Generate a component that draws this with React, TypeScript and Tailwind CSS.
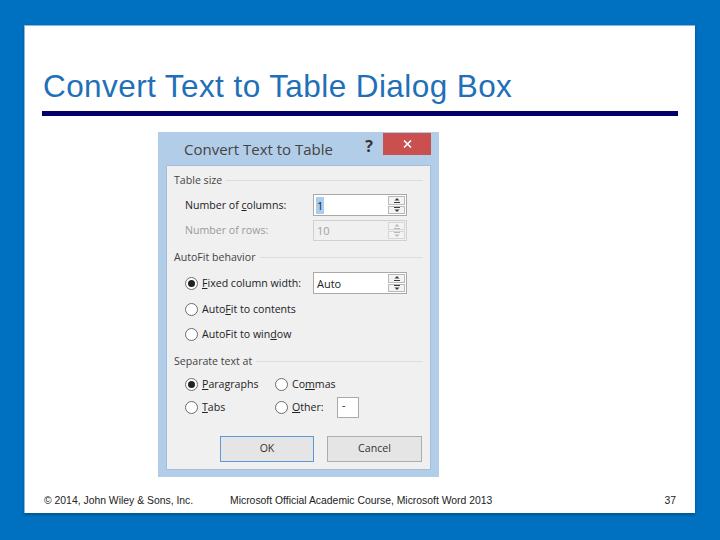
import React from "react";

const ui = { fontFamily: '"Open Sans", "Noto Sans", sans-serif' };

function Spinner({ disabled }: { disabled?: boolean }) {
  const c = disabled ? "#b8b8b8" : "#3a3a3a";
  const b = disabled ? "border-[#d6d6d6]" : "border-[#b9b9b9]";
  return (
    <div className="flex flex-col h-full w-[18px] py-[1px] pr-[1px] gap-[1px]">
      <div className={`flex-1 flex items-center justify-center border ${b} bg-[#f3f3f3]`}>
        <svg width="8" height="6" viewBox="0 0 8 6">
          <path d="M1.5 3.5 L4 1 L6.5 3.5 Z" fill={c} />
          <path d="M1 5.5 H7" stroke={c} strokeWidth="1" />
        </svg>
      </div>
      <div className={`flex-1 flex items-center justify-center border ${b} bg-[#f3f3f3]`}>
        <svg width="8" height="6" viewBox="0 0 8 6">
          <path d="M1 0.5 H7" stroke={c} strokeWidth="1" />
          <path d="M1.5 2.5 L4 5 L6.5 2.5 Z" fill={c} />
        </svg>
      </div>
    </div>
  );
}

function NumInput({ value, disabled, selected, h }: { value: string; disabled?: boolean; selected?: boolean; h: string }) {
  return (
    <div
      className={`flex items-center w-[94px] ${h} border ${
        disabled ? "border-[#d0d0d0] bg-[#f0f0f0] text-[#a0a0a0]" : "border-[#a9a9a9] bg-white text-[#222]"
      }`}
    >
      <div className="flex-1 pl-[2px] text-[11px] leading-none" style={ui}>
        {selected ? <span className="bg-[#a8cdee] px-[1px] py-[1px]">{value}</span> : <span className="pl-[1px]">{value}</span>}
      </div>
      <Spinner disabled={disabled} />
    </div>
  );
}

function Radio({ checked }: { checked?: boolean }) {
  return (
    <div className="w-[13px] h-[13px] rounded-full border border-[#6d6d6d] bg-white flex items-center justify-center shrink-0">
      {checked && <div className="w-[7px] h-[7px] rounded-full bg-[#222]" />}
    </div>
  );
}

function GroupLabel({ text }: { text: string }) {
  return (
    <div className="flex items-center h-[20px] pl-[7px] pr-[7px] gap-[4px]">
      <span className="text-[10.6px] text-[#444] leading-none whitespace-nowrap">{text}</span>
      <div className="flex-1 h-px bg-[#dcdcdc]" />
    </div>
  );
}

export default function App() {
  return (
    <div className="w-[720px] h-[540px] bg-[#0071c1] pt-[25px] pl-[24px]">
      <div className="w-[671px] h-[488px] bg-white border-l border-t border-[#8db4dc] shadow-[0_2px_3px_rgba(0,0,0,0.25)] flex flex-col">
        <div
          className="mt-[42px] pl-[18px] h-[36px] text-[31.5px] leading-[36px] tracking-[0.42px] text-[#1f70b6] whitespace-nowrap"
          style={{ fontFamily: '"Liberation Sans", Arial, sans-serif' }}
        >
          Convert Text to Table Dialog Box
        </div>
        <div className="mt-[7px] ml-[17px] w-[636px] h-[5px] bg-[#000068]" />

        <div className="mt-[16px] ml-[133px] w-[281px] h-[345px] bg-[#b2cde8] flex flex-col" style={ui}>
          <div className="h-[33px] flex items-start relative">
            <div className="pl-[26px] pt-[7px] text-[15px] leading-[20px] text-[#444] whitespace-nowrap">
              Convert Text to Table
            </div>
            <div className="flex-1" />
            <div className="pt-[4px] pr-[10px] text-[16px] font-bold text-[#333] leading-[20px]">?</div>
            <div className="mt-[1px] mr-[8px] w-[48px] h-[22px] bg-[#c9504f] flex items-center justify-center">
              <svg width="9" height="8" viewBox="0 0 9 8">
                <path d="M1 0.5 L8 7.5 M8 0.5 L1 7.5" stroke="white" strokeWidth="1.6" />
              </svg>
            </div>
          </div>
          <div className="mx-[8px] w-[265px] h-[305px] bg-[#f0f0f0] border border-[#a3bfdb] flex flex-col text-[10.6px] text-[#222]">
            <div className="h-[4px]" />
            <GroupLabel text="Table size" />
            <div className="mt-[4px] h-[22px] flex items-center">
              <div className="w-[146px] pl-[18px] leading-none">
                Number of <span className="underline">c</span>olumns:
              </div>
              <NumInput value="1" selected h="h-[22px]" />
            </div>
            <div className="mt-[4px] h-[21px] flex items-center">
              <div className="w-[146px] pl-[18px] leading-none text-[#9a9a9a]">Number of rows:</div>
              <NumInput value="10" disabled h="h-[21px]" />
            </div>
            <div className="mt-[6px]">
              <GroupLabel text="AutoFit behavior" />
            </div>
            <div className="mt-[5px] h-[22px] flex items-center">
              <div className="w-[146px] pl-[18px] flex items-center gap-[4px]">
                <Radio checked />
                <span className="leading-none whitespace-nowrap">
                  <span className="underline">F</span>ixed column width:
                </span>
              </div>
              <NumInput value="Auto" h="h-[22px]" />
            </div>
            <div className="mt-[5px] h-[20px] pl-[18px] flex items-center gap-[4px]">
              <Radio />
              <span className="leading-none">
                Auto<span className="underline">F</span>it to contents
              </span>
            </div>
            <div className="mt-[5px] h-[20px] pl-[18px] flex items-center gap-[4px]">
              <Radio />
              <span className="leading-none">
                AutoFit to win<span className="underline">d</span>ow
              </span>
            </div>
            <div className="mt-[7px]">
              <GroupLabel text="Separate text at" />
            </div>
            <div className="mt-[3px] h-[20px] pl-[18px] flex items-center">
              <div className="w-[90px] flex items-center gap-[4px]">
                <Radio checked />
                <span className="leading-none">
                  <span className="underline">P</span>aragraphs
                </span>
              </div>
              <div className="flex items-center gap-[4px]">
                <Radio />
                <span className="leading-none">
                  Co<span className="underline">m</span>mas
                </span>
              </div>
            </div>
            <div className="mt-[2px] h-[22px] pl-[18px] flex items-center">
              <div className="w-[90px] flex items-center gap-[4px]">
                <Radio />
                <span className="leading-none">
                  <span className="underline">T</span>abs
                </span>
              </div>
              <div className="w-[62px] flex items-center gap-[4px]">
                <Radio />
                <span className="leading-none">
                  <span className="underline">O</span>ther:
                </span>
              </div>
              <div className="w-[22px] h-[21px] bg-white border border-[#a9a9a9] pl-[4px] leading-[14px]">-</div>
            </div>
            <div className="mt-[18px] h-[26px] pl-[53px] flex gap-[13px]">
              <div className="w-[94px] h-[26px] border border-[#5c9ad6] bg-[#e5e5e5] flex items-center justify-center text-[#333]">
                OK
              </div>
              <div className="w-[95px] h-[26px] border border-[#adadad] bg-[#e5e5e5] flex items-center justify-center text-[#333]">
                Cancel
              </div>
            </div>
          </div>
        </div>

        <div
          className="mt-auto mb-[5px] h-[14px] flex items-center text-[10.4px] text-[#222] whitespace-nowrap"
          style={{ fontFamily: '"Liberation Sans", Arial, sans-serif' }}
        >
          <div className="w-[205px] pl-[19px]">© 2014, John Wiley &amp; Sons, Inc.</div>
          <div className="flex-1">Microsoft Official Academic Course, Microsoft Word 2013</div>
          <div className="pr-[19px]">37</div>
        </div>
      </div>
    </div>
  );
}
